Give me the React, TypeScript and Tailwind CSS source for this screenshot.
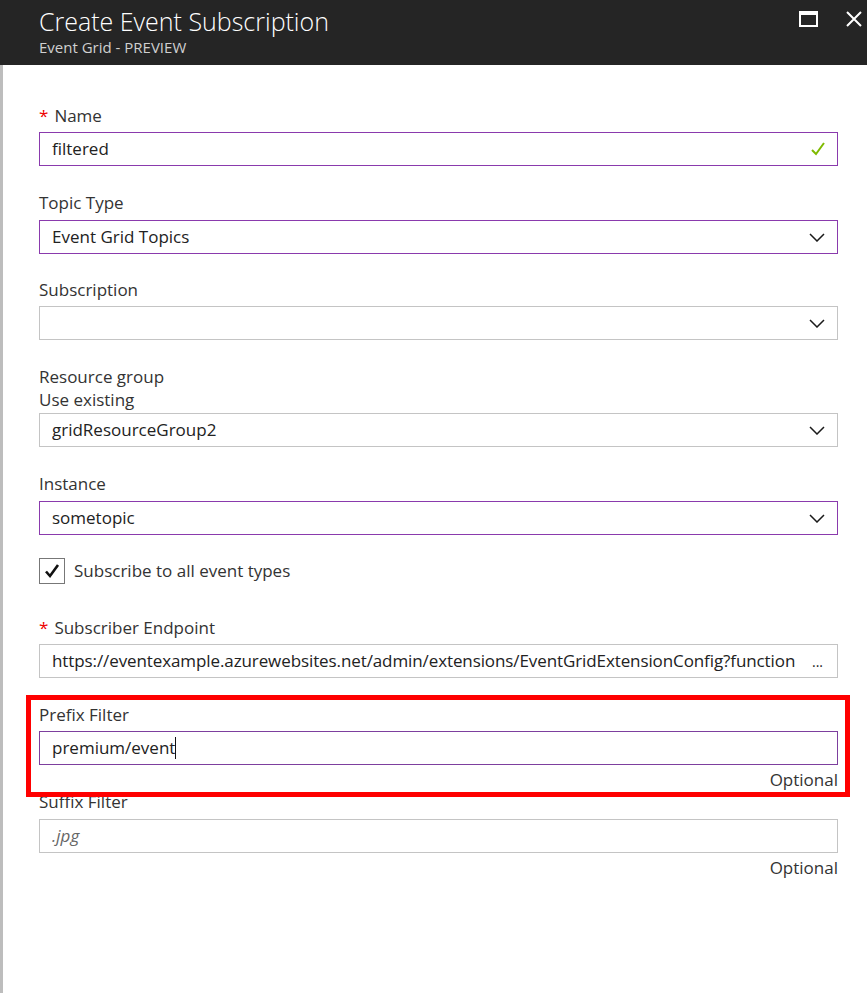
import React from "react";

const FONT = { fontFamily: '"Open Sans", "Noto Sans", sans-serif' };

function Chevron() {
  return (
    <svg width="16" height="9" viewBox="0 0 16 9" className="shrink-0">
      <path d="M1 1 L8 8 L15 1" fill="none" stroke="#1a1a1a" strokeWidth="1.5" />
    </svg>
  );
}

function Label({ text, required }: { text: string; required?: boolean }) {
  return (
    <div className="h-[22px] leading-[22px] text-[17px] text-[#333]">
      {required && <span className="text-[#e00] mr-[6px]">*</span>}
      {text}
    </div>
  );
}

interface FieldProps {
  label: string;
  value: string;
  required?: boolean;
  active?: boolean;
  select?: boolean;
  check?: boolean;
  italic?: boolean;
}

function Box({ value, active, select, check, italic }: Omit<FieldProps, "label">) {
  return (
    <div
      className={`h-[34px] flex items-center pl-[12px] pr-[12px] border ${
        active ? "border-[#8a3aad]" : "border-[#c4c4c4]"
      } bg-white`}
    >
      <div
        className={`flex-1 text-[17px] truncate ${
          italic ? "italic text-[#666]" : "text-[#222]"
        }`}
      >
        {value}
      </div>
      {select && <Chevron />}
      {check && (
        <svg width="14" height="14" viewBox="0 0 14 14" className="shrink-0">
          <path d="M1 8 L5 12 L13 1" fill="none" stroke="#7fba00" strokeWidth="2" />
        </svg>
      )}
    </div>
  );
}

export default function App() {
  return (
    <div className="w-[867px] h-[993px] bg-white flex flex-col" style={FONT}>
      {/* Header */}
      <div className="h-[65px] bg-[#252525] flex items-start justify-between pl-[39px] pr-[5px]">
        <div className="pt-[5px]">
          <div className="text-[25px] leading-[32px] font-light text-white">
            Create Event Subscription
          </div>
          <div className="text-[15px] leading-[20px] text-[#d0d0d0]">
            Event Grid - PREVIEW
          </div>
        </div>
        <div className="flex items-center gap-[28px] pt-[11px]">
          <svg width="19" height="16" viewBox="0 0 19 16">
            <rect x="1" y="2" width="17" height="13" fill="none" stroke="#fff" strokeWidth="2" />
            <rect x="0" y="0" width="19" height="4" fill="#fff" />
          </svg>
          <svg width="16" height="16" viewBox="0 0 16 16">
            <path d="M1 1 L15 15 M15 1 L1 15" stroke="#fff" strokeWidth="2" />
          </svg>
        </div>
      </div>

      {/* Body */}
      <div className="flex-1 border-l-[3px] border-[#bdbdbd] pl-[36px] pr-[29px] pt-[40px]">
        <Label text="Name" required />
        <div className="mt-[5px]">
          <Box value="filtered" active check />
        </div>

        <div className="mt-[26px]">
          <Label text="Topic Type" />
          <div className="mt-[6px]">
            <Box value="Event Grid Topics" active select />
          </div>
        </div>

        <div className="mt-[25px]">
          <Label text="Subscription" />
          <div className="mt-[5px]">
            <Box value="" select />
          </div>
        </div>

        <div className="mt-[26px]">
          <Label text="Resource group" />
          <div className="h-[24px] leading-[24px] text-[17px] text-[#333]">Use existing</div>
          <div className="mt-[1px]">
            <Box value="gridResourceGroup2" select />
          </div>
        </div>

        <div className="mt-[26px]">
          <Label text="Instance" />
          <div className="mt-[6px]">
            <Box value="sometopic" active select />
          </div>
        </div>

        <div className="mt-[23px] flex items-center gap-[9px]">
          <div className="w-[26px] h-[26px] border border-[#777] flex items-center justify-center">
            <svg width="16" height="16" viewBox="0 0 16 16">
              <path d="M2 8.5 L6 13 L14 2" fill="none" stroke="#111" strokeWidth="2.6" />
            </svg>
          </div>
          <span className="text-[17px] text-[#333]">Subscribe to all event types</span>
        </div>

        <div className="mt-[33px]">
          <Label text="Subscriber Endpoint" required />
          <div className="mt-[5px] h-[34px] flex items-center pl-[12px] pr-[14px] border border-[#c4c4c4]">
            <div className="flex-1 min-w-0 text-[17px] tracking-[-0.1px] text-[#222] whitespace-nowrap">
              https://eventexample.azurewebsites.net/admin/extensions/EventGridExtensionConfig?function
            </div>
            <span className="ml-[6px] text-[14px] text-[#222] shrink-0">...</span>
          </div>
        </div>

        <div className="mt-[26px] relative">
          <div className="absolute -top-[9px] -left-[13px] -right-[12px] -bottom-[6px] border-[5px] border-[#ff0000] pointer-events-none" />
          <Label text="Prefix Filter" />
          <div className="mt-[5px] h-[34px] flex items-center pl-[12px] border border-[#7d3f9e]">
            <span className="text-[17px] text-[#222]">premium/event</span>
            <span className="w-[1px] h-[22px] bg-[#111]" />
          </div>
          <div className="mt-[4px] h-[22px] leading-[22px] text-right text-[17px] text-[#333]">
            Optional
          </div>
        </div>

        <div>
          <Label text="Suffix Filter" />
          <div className="mt-[6px]">
            <Box value=".jpg" italic />
          </div>
          <div className="mt-[4px] h-[22px] leading-[22px] text-right text-[17px] text-[#333]">
            Optional
          </div>
        </div>
      </div>
    </div>
  );
}
